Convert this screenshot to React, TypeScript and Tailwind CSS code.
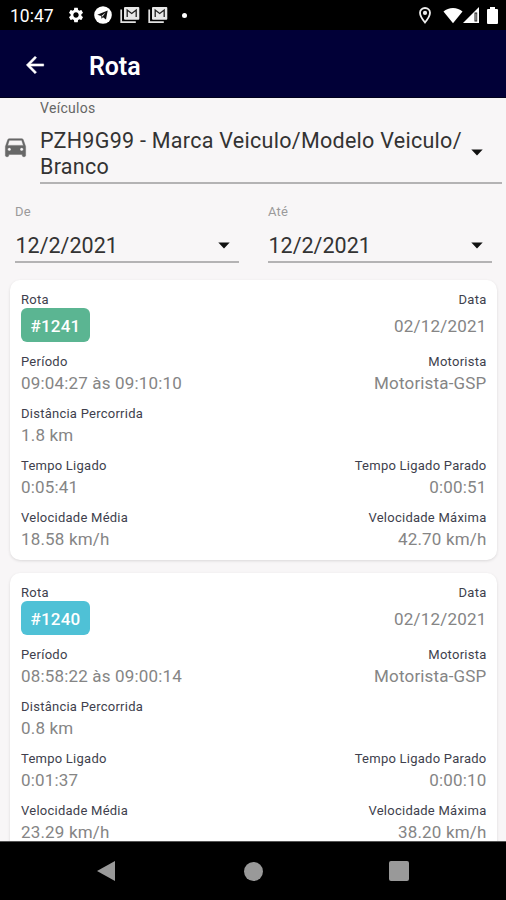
import React from "react";
import { MdSettings } from "react-icons/md";

type Route = {
  id: string;
  badge: string;
  date: string;
  period: string;
  driver: string;
  distance: string;
  timeOn: string;
  timeIdle: string;
  avg: string;
  max: string;
};

const routes: Route[] = [
  { id: "#1241", badge: "bg-[#5bb592]", date: "02/12/2021", period: "09:04:27 às 09:10:10", driver: "Motorista-GSP", distance: "1.8 km", timeOn: "0:05:41", timeIdle: "0:00:51", avg: "18.58 km/h", max: "42.70 km/h" },
  { id: "#1240", badge: "bg-[#4fc1d6]", date: "02/12/2021", period: "08:58:22 às 09:00:14", driver: "Motorista-GSP", distance: "0.8 km", timeOn: "0:01:37", timeIdle: "0:00:10", avg: "23.29 km/h", max: "38.20 km/h" },
];

function Caret() {
  return (
    <svg width="12" height="7" viewBox="0 0 12 7" className="shrink-0">
      <path d="M0.3 0.5h11.4L6 6.5z" fill="#111" />
    </svg>
  );
}

function BackIcon() {
  return (
    <svg width="26" height="26" viewBox="0 0 24 24" className="-mt-[2px] shrink-0">
      <path d="M20 11H7.830l5.590-5.590L12 4l-8 8 8 8 1.410-1.410L7.830 13H20v-2z" fill="#fff" stroke="#fff" strokeWidth="0.5" />
    </svg>
  );
}

function CarIcon() {
  return (
    <svg width="27" height="27" viewBox="0 0 24 24">
      <path
        d="M18.920 6.010C18.720 5.420 18.160 5 17.500 5h-11c-.66 0-1.210.42-1.420 1.010L3 12v8c0 .55.45 1 1 1h1c.55 0 1-.45 1-1v-1h12v1c0 .55.45 1 1 1h1c.55 0 1-.45 1-1v-8l-2.080-5.990zM6.500 16c-.83 0-1.500-.67-1.500-1.500S5.670 13 6.500 13s1.500.67 1.500 1.500S7.330 16 6.500 16zm11 0c-.83 0-1.500-.67-1.500-1.500s.67-1.500 1.500-1.500 1.500.67 1.500 1.500-.67 1.500-1.500 1.500zM5 11l1.500-4.500h11L19 11H5z"
        fill="#686868"
        stroke="#686868"
        strokeWidth="0.4"
      />
    </svg>
  );
}

function MailIcon() {
  return (
    <svg width="20" height="18" viewBox="0 0 20 18" fill="none">
      <path d="M1.2 3.5v12.7h14.6" stroke="#e2e2e2" strokeWidth="1.7" />
      <rect x="4" y="1" width="15.3" height="12.8" rx="1" fill="#e8e8e8" />
      <path d="M7.2 11V4l4.500 3.400L16.200 4v7" stroke="#222" strokeWidth="1.3" />
    </svg>
  );
}

function StatusBar() {
  return (
    <div className="flex h-[30px] shrink-0 items-center bg-black pl-[10px] pr-[8px] text-white">
      <span className="w-[57px] pt-[1px] text-[17.500px] leading-[30px]">10:47</span>
      <MdSettings size={18} className="shrink-0" />
      <svg width="18" height="18" viewBox="0 0 18 18" className="ml-[9px]">
        <circle cx="9" cy="9" r="8.8" fill="#fff" />
        <path d="M3.3 8.8 13.7 4.6 12 13.5 9 11.3 7.5 12.8 7.2 10z" fill="#111" />
        <path d="m7.4 10 4.2-3.6-3 4.2z" fill="#fff" />
      </svg>
      <div className="ml-[8px] flex gap-[8px]">
        <MailIcon />
        <MailIcon />
      </div>
      <div className="ml-[14px] size-[5px] rounded-full bg-white" />
      <div className="ml-auto flex items-center">
        <svg width="12" height="17" viewBox="0 0 12 17" fill="none" className="mr-[12px]">
          <path d="M6 1C3.2 1 1 3.1 1 5.8 1 9.5 6 15.5 6 15.5s5-6 5-9.7C11 3.100 8.800 1 6 1z" stroke="#eee" strokeWidth="1.8" />
          <circle cx="6" cy="5.900" r="2.100" fill="#eee" />
        </svg>
        <svg width="20" height="17" viewBox="0 0 20 17">
          <path d="M0.500 4.500C5.500-.3 14.500-.3 19.500 4.500L10 16.300z" fill="#fff" />
        </svg>
        <svg width="16" height="16" viewBox="0 0 16 16" className="mr-[8px]">
          <path d="M16 0v16H0z" fill="#fff" />
          <path d="M11.500 5.500h2.700v9h-2.700z" fill="#222" />
          <path d="M12.500 6.500h.9v7h-.9z" fill="#ddd" />
        </svg>
        <svg width="11" height="17" viewBox="0 0 11 17">
          <path d="M3 0h5v2h2q1 0 1 1v13q0 1-1 1H1q-1 0-1-1V3q0-1 1-1h2z" fill="#fff" />
        </svg>
      </div>
    </div>
  );
}

function DateField({ label, value }: { label: string; value: string }) {
  return (
    <div className="flex w-[224px] flex-col">
      <span className="text-[13px] leading-4 tracking-[0.2px] text-[#9b9a9b]">{label}</span>
      <div className="mt-[10px] flex h-[33px] items-center justify-between border-b-2 border-[#b4b3b4] pr-[9px]">
        <span className="pl-[0.5px] text-[21.500px] leading-6 text-[#333]">{value}</span>
        <Caret />
      </div>
    </div>
  );
}

function Cell({ label, value, right }: { label: string; value: string; right?: boolean }) {
  return (
    <div className={right ? "-mr-[0.500px] flex flex-col items-end" : "flex flex-col"}>
      <span className="text-[13px] leading-4 tracking-[0.250px] text-[#403f4d]">{label}</span>
      <span className="mt-[3px] text-[17px] leading-5 tracking-[0.170px] text-[#858585]">{value}</span>
    </div>
  );
}

function RouteCard({ route }: { route: Route }) {
  return (
    <section className="h-[280px] shrink-0 rounded-[10px] bg-white px-[11px] pt-[12px] shadow-[0_1px_3px_rgba(0,0,0,0.12)]">
      <div className="flex h-[62px] justify-between">
        <div>
          <div className="text-[13px] leading-4 tracking-[0.250px] text-[#403f4d]">Rota</div>
          <div className={`flex h-[34px] w-[69px] items-center justify-center rounded-[6px] pt-[3px] text-[17px] font-medium tracking-[0.200px] text-white ${route.badge}`}>{route.id}</div>
        </div>
        <div className="-mr-[0.500px] flex flex-col items-end">
          <div className="text-[13px] leading-4 tracking-[0.250px] text-[#403f4d]">Data</div>
          <div className="text-[17px] leading-[36px] tracking-[0.200px] text-[#858585]">{route.date}</div>
        </div>
      </div>
      <div className="grid grid-cols-2 auto-rows-[52px]">
        <Cell label="Período" value={route.period} />
        <Cell label="Motorista" value={route.driver} right />
        <div className="col-span-2">
          <Cell label="Distância Percorrida" value={route.distance} />
        </div>
        <Cell label="Tempo Ligado" value={route.timeOn} />
        <Cell label="Tempo Ligado Parado" value={route.timeIdle} right />
        <Cell label="Velocidade Média" value={route.avg} />
        <Cell label="Velocidade Máxima" value={route.max} right />
      </div>
    </section>
  );
}

export default function App() {
  return (
    <div className="flex h-[900px] w-[506px] flex-col overflow-hidden bg-[#f8f6f7] font-['Roboto',sans-serif]">
      <StatusBar />
      <header className="flex h-[68px] shrink-0 items-center border-b border-[#01011c] bg-[#010037] pl-[22px] pt-[4px] text-white">
        <BackIcon />
        <h1 className="ml-[41px] pt-[2px] text-[25px] font-semibold leading-8 tracking-[-0.100px]">Rota</h1>
      </header>
      <main className="flex min-h-0 flex-1 flex-col overflow-hidden">
        <div className="flex h-[86px] shrink-0 pr-[4px]">
          <div className="w-[40px] shrink-0 pl-[2px] pt-[35px]">
            <CarIcon />
          </div>
          <div className="flex-1 border-b-2 border-[#b4b3b4]">
            <div className="pt-[2px] text-[14px] leading-4 tracking-[0.300px] text-[#666]">Veículos</div>
            <div className="flex items-center justify-between pr-[19px] pt-[12px]">
              <div className="whitespace-nowrap text-[21.500px] leading-[26px] tracking-[0.280px] text-[#333]">
                PZH9G99 - Marca Veiculo/Modelo Veiculo/
                <br />
                Branco
              </div>
              <div className="-mt-[3px] flex">
                <Caret />
              </div>
            </div>
          </div>
        </div>
        <div className="flex shrink-0 justify-between pl-[15px] pr-[14px] pt-[20px]">
          <DateField label="De" value="12/2/2021" />
          <DateField label="Até" value="12/2/2021" />
        </div>
        <div className="mt-[17px] flex flex-col gap-[13px] pl-[10px] pr-[9px]">
          {routes.map((route) => (
            <RouteCard key={route.id} route={route} />
          ))}
        </div>
      </main>
      <nav className="flex h-[59px] shrink-0 items-center justify-between border-t border-[#555] bg-black px-[97px]">
        <svg width="18" height="20" viewBox="0 0 18 20">
          <path d="M0 10 18 0v20z" fill="#999" />
        </svg>
        <div className="ml-[3px] size-[19px] rounded-full bg-[#999]" />
        <div className="size-[20px] rounded-[2px] bg-[#999]" />
      </nav>
    </div>
  );
}
